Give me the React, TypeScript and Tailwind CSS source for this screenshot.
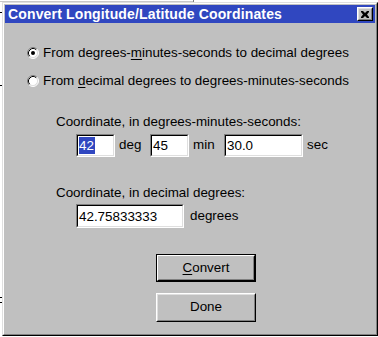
import React from 'react';

function Radio({ checked }: { checked?: boolean }) {
  return (
    <svg width="12" height="12" viewBox="0 0 12 12" className="shrink-0">
      <circle cx="6" cy="6" r="5" fill="#fff" />
      <path d="M2.11 9.89 A5.5 5.5 0 0 1 9.89 2.11" fill="none" stroke="#808080" strokeWidth="1" />
      <path d="M9.89 2.11 A5.5 5.5 0 0 1 2.11 9.89" fill="none" stroke="#fff" strokeWidth="1" />
      <path d="M2.82 9.18 A4.5 4.5 0 0 1 9.18 2.82" fill="none" stroke="#000" strokeWidth="1" />
      <path d="M9.18 2.82 A4.5 4.5 0 0 1 2.82 9.18" fill="none" stroke="#dfdfdf" strokeWidth="1" />
      {checked && <circle cx="6" cy="6" r="2" fill="#000" />}
    </svg>
  );
}

function Field({ w, h = 23, children }: { w: string; h?: number; children: React.ReactNode }) {
  return (
    <div
      className={`${w} border border-t-[#808080] border-l-[#808080] border-r-white border-b-white shrink-0`}
      style={{ height: h }}
    >
      <div className="h-full w-full border border-t-black border-l-black border-r-[#dfdfdf] border-b-[#dfdfdf] bg-white flex items-center pl-[1px] text-[13.4px] leading-[17px] text-black">
        {children}
      </div>
    </div>
  );
}

export default function App() {
  return (
    <div className="relative w-[378px] h-[337px] bg-white overflow-hidden font-['Liberation_Sans',Arial,sans-serif]">
      {/* bits of other windows behind */}
      <div className="absolute left-0 top-[1px] w-[193px] h-px bg-[#c8c8c8]" />
      <div className="absolute left-[193px] top-0 w-px h-[2px] bg-[#808080]" />
      <div className="absolute left-0 top-[12px] w-[2px] h-px bg-black" />
      <div className="absolute left-0 top-[85px] w-[2px] h-px bg-black" />
      <div className="absolute left-0 top-[297px] w-[2px] h-px bg-black" />
      <div className="absolute left-0 top-[302px] w-[2px] h-px bg-black" />

      {/* Window */}
      <div className="absolute left-[2px] top-[2px] w-[376px] h-[334px] border border-t-[#dfdfdf] border-l-[#dfdfdf] border-r-black border-b-black">
        <div className="h-full w-full border border-t-white border-l-white border-r-[#808080] border-b-[#808080] bg-[#c0c0c0] p-[1px] flex flex-col">
          {/* Title bar */}
          <div className="h-[18px] bg-[#3047c0] flex items-center justify-between pl-[3px] pr-[2px] shrink-0">
            <span className="text-white font-bold text-[14px] tracking-[0.15px] leading-none">Convert Longitude/Latitude Coordinates</span>
            <div className="w-[16px] h-[14px] border border-t-white border-l-white border-r-black border-b-black">
              <div className="h-full w-full border border-t-[#dfdfdf] border-l-[#dfdfdf] border-r-[#808080] border-b-[#808080] bg-[#c0c0c0] flex items-center justify-center">
                <svg width="8" height="7" viewBox="0 0 8 7">
                  <path d="M0 0h2l2 2 2-2h2v1L6 3.5 8 6v1H6L4 5 2 7H0V6l2-2.5L0 1z" fill="#000" />
                </svg>
              </div>
            </div>
          </div>

          {/* Body */}
          <div className="flex-1 flex flex-col text-[13.4px] text-black pt-[22px]">
            <div className="flex items-center h-[16px] pl-[22px] gap-[4px]">
              <Radio checked />
              <span>
                From degrees-<u className="underline-offset-2">m</u>inutes-seconds to decimal degrees
              </span>
            </div>
            <div className="flex items-center h-[16px] pl-[22px] gap-[4px] mt-[12px]">
              <Radio />
              <span>
                From <u className="underline-offset-2">d</u>ecimal degrees to degrees-minutes-seconds
              </span>
            </div>

            <div className="mt-[25px] pl-[51px] h-[16px] leading-[16px]">Coordinate, in degrees-minutes-seconds:</div>
            <div className="mt-[4px] pl-[71px] flex items-center">
              <Field w="w-[39px]">
                <span className="bg-[#3047c0] text-white pr-[1px]">42</span>
              </Field>
              <span className="w-[35px] pl-[4px]">deg</span>
              <Field w="w-[39px]">45</Field>
              <span className="w-[35px] pl-[4px]">min</span>
              <Field w="w-[79px]">30.0</Field>
              <span className="pl-[4px]">sec</span>
            </div>

            <div className="mt-[28px] pl-[51px] h-[16px] leading-[16px]">Coordinate, in decimal degrees:</div>
            <div className="mt-[3px] pl-[71px] flex items-center">
              <Field w="w-[108px]" h={24}>42.75833333</Field>
              <span className="pl-[6px]">degrees</span>
            </div>

            <div className="mt-[26px] pl-[151px]">
              <div className="w-[100px] h-[28px] border border-black">
                <div className="h-full w-full border border-t-white border-l-white border-r-black border-b-black">
                  <div className="h-full w-full border border-t-[#c0c0c0] border-l-[#c0c0c0] border-r-[#808080] border-b-[#808080] flex items-center justify-center">
                    <span>
                      <u className="underline-offset-2">C</u>onvert
                    </span>
                  </div>
                </div>
              </div>
            </div>
            <div className="mt-[11px] pl-[151px]">
              <div className="w-[100px] h-[29px] border border-t-white border-l-white border-r-black border-b-black">
                <div className="h-full w-full border border-t-[#dfdfdf] border-l-[#dfdfdf] border-r-[#808080] border-b-[#808080] flex items-center justify-center">
                  Done
                </div>
              </div>
            </div>
          </div>
        </div>
      </div>
    </div>
  );
}
